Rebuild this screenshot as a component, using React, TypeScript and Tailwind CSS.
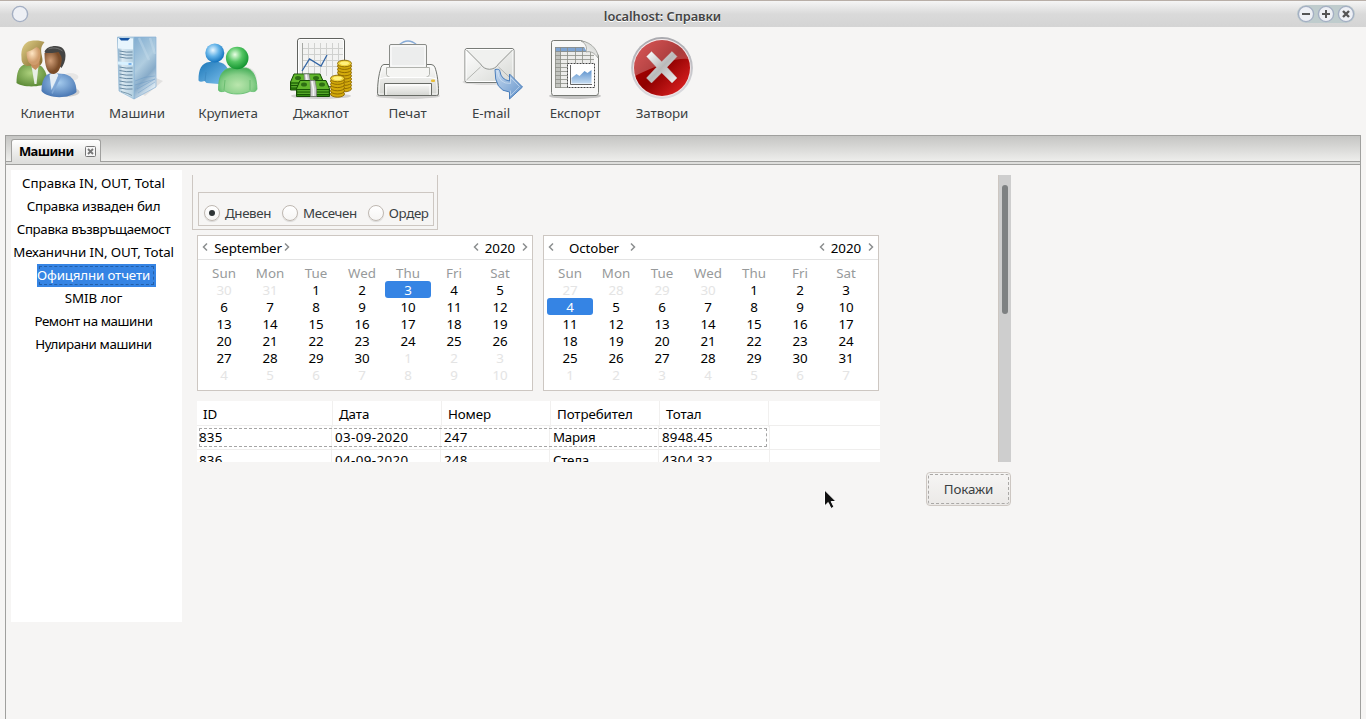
import type { ReactNode } from "react";

const FONT = "font-['Noto_Sans','Liberation_Sans',sans-serif]";

function ClientsIcon() {
  return (
    <svg viewBox="14.5 35 66 66" className="h-[66px] w-[66px]">
      <defs>
        <linearGradient id="hairA" x1="0" y1="0" x2="1" y2="1"><stop offset="0" stopColor="#e3d28a" /><stop offset="1" stopColor="#7c6226" /></linearGradient>
        <radialGradient id="faceA" cx=".4" cy=".35"><stop offset="0" stopColor="#ffe6c4" /><stop offset="1" stopColor="#cf9c6b" /></radialGradient>
        <radialGradient id="faceB" cx=".35" cy=".4"><stop offset="0" stopColor="#d2a079" /><stop offset="1" stopColor="#7b4d2a" /></radialGradient>
        <radialGradient id="bodyA" cx=".45" cy=".4" r=".6"><stop offset="0" stopColor="#acd07c" /><stop offset="1" stopColor="#5f8d39" /></radialGradient>
        <radialGradient id="bodyB" cx=".5" cy=".4" r=".6"><stop offset="0" stopColor="#a5cbee" /><stop offset="1" stopColor="#4a78b4" /></radialGradient>
      </defs>
      <ellipse cx="65" cy="92" rx="14" ry="5" fill="#000" opacity=".15" />
      <ellipse cx="70" cy="77" rx="8" ry="4" fill="#000" opacity=".06" />
      <path d="M16 83c0-10 2-17 9-19l14 1c5 3 8 9 8 18-5 4-25 5-31 0z" fill="url(#bodyA)" />
      <path d="M31 66l3 18h2l2-18-4-3z" fill="#e8eee6" />
      <path d="M21 58c-1-10 3-16 9-17 6-1 11 0 14 1-3 4-4 6-3 12 1 5 2 8-1 11l-14 1c-4-2-5-4-5-8z" fill="url(#hairA)" />
      <path d="M30 60l1 7 4 3 4-4v-6z" fill="#c58d5c" />
      <path d="M26 52c4-1 7-3 10-5 3 1 4 3 4 8 0 6-3 10-6 10-5 0-8-4-8-13z" fill="url(#faceA)" />
      <path d="M41 91c0-10 3-17 10-18l13 1c8 2 12 8 12 18-7 7-29 7-35-1z" fill="url(#bodyB)" />
      <path d="M49 75l2 15 7-15-4-4z" fill="#e4edf5" />
      <path d="M58 75l4-1-10 20-1-1z" fill="#7fa6d5" />
      <path d="M44 52c1-4 6-6 11-6 7 0 10 4 10 10 0 5-2 9-4 12L47 55z" fill="#444443" />
      <path d="M44 53c5 0 11 0 14-1 2 3 4 5 3 10-1 7-4 12-8 12-6 0-9-7-9-21z" fill="url(#faceB)" />
      <path d="M48 49c5-2 10-1 14 2" fill="none" stroke="#888" opacity=".7" />
    </svg>
  );
}

function ServerIcon() {
  return (
    <svg viewBox="104 35 66 66" className="h-[66px] w-[66px]">
      <defs>
        <linearGradient id="srvSide" x1="0" y1="0" x2=".4" y2="1"><stop offset="0" stopColor="#80acd0" /><stop offset=".5" stopColor="#b0cde0" /><stop offset=".75" stopColor="#87abc9" /><stop offset="1" stopColor="#dce9f2" /></linearGradient>
        <linearGradient id="srvFront" x1="0" y1="0" x2="1" y2="0"><stop offset="0" stopColor="#8db1cd" /><stop offset=".3" stopColor="#dbe9f1" /><stop offset="1" stopColor="#b1cee0" /></linearGradient>
      </defs>
      <path d="M145 96l18-15-7-3-14 16z" fill="#000" opacity=".08" />
      <path d="M134 37h22v50l-22 12z" fill="url(#srvSide)" stroke="#8ab2d6" strokeWidth=".7" />
      <path d="M117.500 37H134v62l-15-8z" fill="url(#srvFront)" stroke="#91b7d5" strokeWidth=".7" />
      <path d="M118 38l15 .5v11l-15-1z" fill="#e8f5fd" />
      <path d="M119 38h11l-2 2.500h-7z" fill="#1553a2" />
      {[51, 54, 57, 67, 70.5, 74, 77.500, 81, 84.500, 88].map((y) => (
        <path key={y} d={`M119.500 ${y}q7 1.700 13 1`} fill="none" stroke="#5c7f9a" strokeWidth=".9" />
      ))}
      <path d="M118 61.500l15 1v3l-15-1z" fill="#d8f1ff" />
      <path d="M128.500 64h3" stroke="#5a9be0" strokeWidth="1.500" />
      <path d="M139 38l10 22M150 38l5 16" stroke="#c8deed" strokeWidth="2.500" opacity=".4" />
      <path d="M135 81q10-5 20-5M135 85l20-6M137 89l18-10M138 93l17-11" fill="none" stroke="#6596c3" strokeWidth=".7" opacity=".6" />
      <path d="M121 91.500q8 2 11 4" stroke="#62859c" strokeWidth=".8" fill="none" />
    </svg>
  );
}

function PeopleIcon() {
  return (
    <svg viewBox="195 35 66 66" className="h-[66px] w-[66px]">
      <defs>
        <radialGradient id="ballBlue" cx=".4" cy=".35" r=".65"><stop offset="0" stopColor="#e9f7ff" /><stop offset=".5" stopColor="#63b3e8" /><stop offset="1" stopColor="#1474be" /></radialGradient>
        <radialGradient id="ballGreen" cx=".4" cy=".35" r=".65"><stop offset="0" stopColor="#eaffe5" /><stop offset=".5" stopColor="#54c563" /><stop offset="1" stopColor="#149631" /></radialGradient>
        <linearGradient id="torsoBlue" x1="0" y1="0" x2="1" y2="1"><stop offset="0" stopColor="#1c77b8" /><stop offset="1" stopColor="#83c4ef" /></linearGradient>
        <radialGradient id="torsoGreen" cx=".5" cy=".65" r=".65"><stop offset="0" stopColor="#bae6ad" /><stop offset=".6" stopColor="#8bd08b" /><stop offset="1" stopColor="#4bb15d" /></radialGradient>
      </defs>
      <ellipse cx="246" cy="80" rx="11" ry="13" fill="#000" opacity=".07" />
      <path d="M198.500 80c0-11 3-17 11-18h9c8 1 11 8 12 17-1 3-3 4-6 3l-6 2-12-1-2-2c-3 1-6 1-6-1z" fill="url(#torsoBlue)" />
      <path d="M206 72l-1 9" stroke="#3a86bd" fill="none" opacity=".7" />
      <circle cx="214.800" cy="53" r="9.500" fill="url(#ballBlue)" />
      <path d="M218.500 90c0-13 3-20 11-22h17c7 2 10 9 10.500 21-1 3-4 3-7 2-6 4-20 4-25 0-3 1-6 1-6.500-1z" fill="url(#torsoGreen)" stroke="#5cbb68" strokeWidth=".8" />
      <path d="M225 80l-1 10M250 80v10" stroke="#62b86a" strokeWidth=".8" fill="none" />
      <circle cx="237.200" cy="58" r="11.300" fill="url(#ballGreen)" />
    </svg>
  );
}

function Bills({ x, y }: { x: number; y: number }) {
  return (
    <g transform={`translate(${x} ${y})`}>
      <path d="M4 .5h26l3.500 8v8H.500v-8z" fill="#348b11" stroke="#174d05" />
      <path d="M1 9l3.500-8h25l3.500 8z" fill="#62b62c" />
      <path d="M1 9.500h32M1 12h32M1 14.500h32" stroke="#195605" />
      <path d="M1.500 10.800h31M1.500 13.300h31" stroke="#73c23f" strokeWidth=".7" />
      <ellipse cx="8" cy="4.500" rx="3" ry="2" fill="#2d6d13" />
      <ellipse cx="26" cy="4.500" rx="3" ry="2" fill="#2d6d13" />
      <path d="M14 .5h5l1.500 8v8h-6v-8z" fill="#cacaca" stroke="#777" strokeWidth=".7" />
      <path d="M16 1l1.500 8v7" stroke="#f6f6f6" strokeWidth="1.500" fill="none" />
    </g>
  );
}

function Coins({ x, y, n }: { x: number; y: number; n: number }) {
  return (
    <g transform={`translate(${x} ${y})`}>
      {Array.from({ length: n }, (_, i) => n - i).map((k) => (
        <ellipse key={k} cx="7" cy={3 + k * 3.2} rx="7" ry="3.200" fill="#d2a90b" stroke="#8a6500" strokeWidth=".9" />
      ))}
      <ellipse cx="7" cy="3.500" rx="7" ry="3.300" fill="#efd33c" stroke="#8a6500" strokeWidth=".9" />
      <ellipse cx="7" cy="3.300" rx="4.500" ry="1.800" fill="#fff07c" />
    </g>
  );
}

function JackpotIcon() {
  return (
    <svg viewBox="288 35 66 66" className="h-[66px] w-[66px]">
      <ellipse cx="321" cy="96" rx="30" ry="3" fill="#000" opacity=".15" />
      <rect x="297.500" y="38.500" width="47" height="48" rx="2.500" fill="#f3f3f2" stroke="#60625e" />
      <rect x="298.500" y="39.500" width="45" height="46" rx="2" fill="none" stroke="#fff" />
      <path d="M308.500 43v33M314.500 43v33M320.500 43v33M326.500 43v33M332.500 43v33M338.500 43v33M302 48.500h41M302 54.500h41M302 60.500h41M302 66.500h41" stroke="#d0d1cf" />
      <path d="M302.500 43v34" stroke="#a6a8a4" />
      <path d="M302 71l7.500-12 11.500 7 6-11" fill="none" stroke="#3465a4" strokeWidth="1.300" />
      <Coins x={337.5} y={60} n={8} />
      <Bills x={290} y={73.500} />
      <Bills x={296} y={80} />
      <Coins x={330.5} y={75} n={5} />
    </svg>
  );
}

function PrinterIcon() {
  return (
    <svg viewBox="375 35 66 66" className="h-[66px] w-[66px]">
      <defs>
        <linearGradient id="prBody" x1="0" y1="0" x2="0" y2="1"><stop offset="0" stopColor="#fbfbfa" /><stop offset="1" stopColor="#d4d5d1" /></linearGradient>
      </defs>
      <ellipse cx="408" cy="96" rx="32" ry="3" fill="#000" opacity=".15" />
      <path d="M399 45q9-8 18 0" fill="none" stroke="#86aad6" strokeWidth="1.500" />
      <path d="M384 64.500h47q3 0 4 3c2 6 3 12 3.500 21v5.500q0 1.500-2 1.500h-57q-2 0-2-2c0-10 1-18 3.500-26q1-3 3-3z" fill="url(#prBody)" stroke="#70736e" />
      <path d="M384 66h47q2 0 3 3c2 5 2 10 3 19v6h-58v-3c0-9 1-16 3-22q0-3 2-3z" fill="none" stroke="#fff" opacity=".7" />
      <rect x="389.500" y="44.500" width="37" height="27" rx="1.500" fill="#eceded" stroke="#8a8c88" />
      <rect x="391" y="46" width="34" height="20" fill="none" stroke="#fff" />
      <path d="M386.500 67.500h43v7q-1 3-4 3h-35q-3 0-4-3z" fill="#f5f5f3" stroke="#b0b2ad" />
      <path d="M379 79l6-1.500h45l7 1.500" fill="none" stroke="#fff" />
      <path d="M384.500 95.500v-12h47v12z" fill="url(#prBody)" stroke="#676a65" />
      <path d="M386 95V85h44v10" fill="none" stroke="#fff" />
      <rect x="431" y="79.500" width="4" height="2.500" rx="1" fill="#e8bd36" />
    </svg>
  );
}

function MailIcon() {
  return (
    <svg viewBox="457.500 35 66 66" className="h-[66px] w-[66px]">
      <defs>
        <linearGradient id="mlBody" x1="0" y1="0" x2="1" y2="1"><stop offset="0" stopColor="#fff" /><stop offset="1" stopColor="#d6d8d4" /></linearGradient>
        <linearGradient id="mlArrow" x1="0" y1="0" x2="1" y2="1"><stop offset="0" stopColor="#c8dbf0" /><stop offset="1" stopColor="#6191c9" /></linearGradient>
      </defs>
      <ellipse cx="486" cy="82" rx="24" ry="3" fill="#000" opacity=".1" />
      <rect x="464.500" y="48.500" width="49" height="34" rx="2" fill="url(#mlBody)" stroke="#787b77" />
      <rect x="465.500" y="49.500" width="47" height="32" rx="1" fill="none" stroke="#fff" />
      <path d="M466 80l14-13M512 80l-14-13" stroke="#b4b6b2" />
      <path d="M466 50l14 14c4 7 14 7 18 0l14-14" fill="#f0f1ef" stroke="#868984" strokeWidth=".9" />
      <path d="M494.500 69.500q5-1 5 2 1 8 9.500 9.500v-7l13 13-13 12v-7q-15-1-14.500-22.500z" fill="url(#mlArrow)" stroke="#4a7ebb" />
      <path d="M497 71q1 13 13 12.500v-6l9 9-9 9v-5" fill="none" stroke="#e1edf8" opacity=".5" />
    </svg>
  );
}

function ExportIcon() {
  return (
    <svg viewBox="542 35 66 66" className="h-[66px] w-[66px]">
      <defs>
        <linearGradient id="exFold" x1="0" y1="1" x2="1" y2="0"><stop offset="0" stopColor="#fff" /><stop offset="1" stopColor="#c9cbc7" /></linearGradient>
        <linearGradient id="exArea" x1="0" y1="0" x2="0" y2="1"><stop offset="0" stopColor="#5c92cd" /><stop offset="1" stopColor="#c6dcf1" /></linearGradient>
      </defs>
      <ellipse cx="575" cy="96" rx="26" ry="3" fill="#000" opacity=".2" />
      <path d="M553.500 40.500h27q8 1 18 15v37q0 3-2.500 3h-42.500q-2 0-2-3v-50q0-2 2-2z" fill="#f8f8f7" stroke="#777a75" />
      <path d="M555 47h30v5h9v36h-39z" fill="#ececea" />
      <path d="M555 52h6v36h-6z" fill="#c2c4bf" />
      <path d="M555 47h29l3 5h-32z" fill="#7fa4d1" />
      <path d="M555.500 47v41M560.500 47v41M567.500 47v41M575.500 47v16M582.500 47v16M590.500 52v11M555 47.500h29M555 51.500h39M555 55.500h39M555 59.500h39M555 63.500h13M555 67.500h13M555 71.500h13M555 75.500h13M555 79.500h13M555 83.500h13M555 87.500h13" stroke="#8b8e87" strokeWidth=".8" />
      <path d="M581 41c6 3 6 8 5 11 4-1 8 0 12 6 1-5-5-16-17-17z" fill="url(#exFold)" stroke="#9a9d98" strokeWidth=".8" />
      <rect x="567.500" y="63.500" width="27" height="24" fill="#fff" stroke="#444" strokeDasharray="2 1" />
      <path d="M570.500 65v19.500H592" fill="none" stroke="#666" />
      <path d="M571.500 78l5-4 3 2 5-5 3 2 4-3v13.500h-20z" fill="url(#exArea)" />
    </svg>
  );
}

function CloseIcon() {
  return (
    <svg viewBox="629 35 66 66" className="h-[66px] w-[66px]">
      <defs>
        <linearGradient id="clRed" x1="0" y1="0" x2="1" y2="1"><stop offset="0" stopColor="#c80000" /><stop offset=".5" stopColor="#8f0000" /><stop offset="1" stopColor="#ec2929" /></linearGradient>
        <linearGradient id="clRing" x1="0" y1="0" x2="0" y2="1"><stop offset="0" stopColor="#a9a9ae" /><stop offset="1" stopColor="#dedee2" /></linearGradient>
        <linearGradient id="clX" x1="0" y1="0" x2="1" y2="1"><stop offset="0" stopColor="#fff" /><stop offset=".5" stopColor="#b9b9b9" /><stop offset="1" stopColor="#f2f2f2" /></linearGradient>
        <linearGradient id="clGloss" x1="0" y1="0" x2="1" y2=".5"><stop offset="0" stopColor="#fff" stopOpacity=".35" /><stop offset="1" stopColor="#fff" stopOpacity=".2" /></linearGradient>
      </defs>
      <circle cx="662" cy="68" r="30.900" fill="url(#clRing)" />
      <circle cx="662" cy="68" r="28.900" fill="#f3e4e6" />
      <circle cx="662" cy="68" r="28" fill="url(#clRed)" />
      <path d="M635 76a28 28 0 1 1 54.500-17q-12-1-24 4-17 6-30.500 13z" fill="url(#clGloss)" />
      <path d="M651.500 51.500l10.200 10.300L672 51.500l5 5L667 67.200 677 78l-5 5-10.300-10.200L651.500 83l-5-5 10-10.800-10-10.700z" fill="url(#clX)" stroke="#c8c0c0" strokeWidth=".4" strokeLinejoin="round" />
    </svg>
  );
}

function ToolButton({ className, label, children }: { className: string; label: string; children: ReactNode }) {
  return (
    <div className={`flex shrink-0 flex-col items-center pt-2 ${className}`}>
      {children}
      <span className="mt-[2px] whitespace-nowrap text-[13.33px] leading-5 tracking-[-0.05px] text-[#3a4042]">{label}</span>
    </div>
  );
}

function WindowButton({ children }: { children?: ReactNode }) {
  return (
    <svg viewBox="0 0 18 18" className="h-[18px] w-[18px]">
      <circle cx="9" cy="9" r="7.600" fill="#eef0f5" stroke="#a4afc3" strokeWidth="1.400" />
      <g stroke="#555" strokeWidth="2" fill="none">{children}</g>
    </svg>
  );
}

const reports = [
  { label: "Справка IN, OUT, Total", tracking: "tracking-normal" },
  { label: "Справка изваден бил", tracking: "tracking-[-0.25px]" },
  { label: "Справка възвръщаемост", tracking: "tracking-[-0.35px]" },
  { label: "Механични IN, OUT, Total", tracking: "tracking-[-0.1px]" },
  { label: "Офицялни отчети", tracking: "tracking-[-0.15px]" },
  { label: "SMIB лог", tracking: "tracking-normal" },
  { label: "Ремонт на машини", tracking: "tracking-[-0.4px]" },
  { label: "Нулирани машини", tracking: "tracking-[-0.35px]" },
];

function Radio({ label, checked }: { label: string; checked?: boolean }) {
  return (
    <label className="flex items-center gap-[5px]">
      <span className="flex h-4 w-4 items-center justify-center rounded-full border border-[#bfb8b1] bg-gradient-to-b from-white to-[#f6f5f4] shadow-[0_1px_1px_rgba(0,0,0,0.12)]">
        {checked && <span className="h-[6px] w-[6px] rounded-full bg-[#2e3436]" />}
      </span>
      <span className="text-[13.33px] leading-5 tracking-[-0.38px] text-[#3a4042]">{label}</span>
    </label>
  );
}

function Chevron({ right }: { right?: boolean }) {
  return (
    <svg viewBox="0 0 6 10" className="mb-px h-[10px] w-[6px] shrink-0">
      <path d={right ? "M1 1.500L4.500 5 1 8.500" : "M5 1.500L1.500 5 5 8.500"} fill="none" stroke="#8b8e8f" strokeWidth="1.500" />
    </svg>
  );
}

const weekDays = ["Sun", "Mon", "Tue", "Wed", "Thu", "Fri", "Sat"];

function Calendar({ month, before, length, selected }: { month: string; before: number[]; length: number; selected: number }) {
  const cells = Array.from({ length: 42 }, (_, i) => {
    if (i < before.length) return { n: before[i], out: true };
    const n = i - before.length + 1;
    return n <= length ? { n, out: false } : { n: n - length, out: true };
  });
  return (
    <div className="h-[156px] w-[336px] shrink-0 border border-[#cdc7c2] bg-white text-[13.33px] text-black">
      <div className="flex h-6 items-center justify-between border-b border-[#e3e3e3] px-1">
        <div className="flex items-center">
          <Chevron />
          <span className="-mr-[3px] w-[79px] pl-px text-center leading-5 tracking-[-0.15px]">{month}</span>
          <Chevron right />
        </div>
        <div className="flex items-center">
          <Chevron />
          <span className="w-[43px] pr-px text-center leading-5">2020</span>
          <Chevron right />
        </div>
      </div>
      <div className="ml-[3px] grid w-[322px] grid-cols-7 pt-1 text-center">
        {weekDays.map((d) => (
          <span key={d} className="h-[17px] leading-[18px] text-[#979a9b]">{d}</span>
        ))}
        {cells.map((c, i) => (
          <span
            key={i}
            className={`h-[17px] leading-[18px] ${c.out ? "text-[#e4e4e4]" : c.n === selected ? "rounded-[3px] bg-[#3584e4] text-white" : ""}`}
          >
            {c.n}
          </span>
        ))}
      </div>
    </div>
  );
}

const columns = ["ID", "Дата", "Номер", "Потребител", "Тотал"];
const rows = [
  ["835", "03-09-2020", "247", "Мария", "8948.45"],
  ["836", "04-09-2020", "248", "Стела", "4304.32"],
];

function OrdersTable() {
  return (
    <div className="mt-[10px] w-[683px] bg-white text-[13.33px] text-black">
      <div className="grid h-[25px] grid-cols-[136px_109px_109px_109px_109px_111px] border-b border-[#efeeed]">
        {columns.map((c) => (
          <span key={c} className="border-r border-[#f1f0ef] pl-[6px] leading-[26px] tracking-[-0.1px]">{c}</span>
        ))}
      </div>
      {rows.map((r, i) => (
        <div key={r[0]} className="relative grid h-6 grid-cols-[135px_109px_109px_109px_111px_110px] border-b border-[#efeeed]">
          {r.map((v, col) => (
            <span
              key={v}
              className={`border-r border-[#f1f0ef] ${col === 0 ? "pl-[2px]" : "pl-[3px]"} ${i === 0 ? "leading-[23px]" : "leading-[21px]"} ${col === 1 ? "tracking-[0.4px]" : col === 3 ? "tracking-[-0.25px]" : "tracking-[0.2px]"}`}
            >
              {v}
            </span>
          ))}
          {i === 0 && <div className="absolute left-[2px] top-[2px] h-[19px] w-[568px] rounded-[1px] border border-dashed border-[#a5a5a5]" />}
        </div>
      ))}
    </div>
  );
}

export default function App() {
  return (
    <div className={`relative flex h-[719px] w-[1366px] flex-col overflow-hidden bg-[#f6f5f4] ${FONT}`}>
      <header className="flex h-[27px] shrink-0 items-center border-t border-[#b8aea7] bg-gradient-to-b from-[#f5f5f5] via-[#dadada] to-[#d4d4d4] pl-[11px] pr-[11px]">
        <div className="flex w-[58px]"><WindowButton /></div>
        <div className="flex-1 pr-[41px] pt-1 text-center text-[12.800px] font-semibold leading-5 tracking-[-0.07px] text-[#444] [text-shadow:0_1px_0_#fff]">localhost: Справки</div>
        <div className="flex w-[58px] gap-[2px] rounded-full bg-[#bfcccd]">
          <WindowButton><path d="M5 9h8" /></WindowButton>
          <WindowButton><path d="M5 9h8M9 5v8" /></WindowButton>
          <WindowButton><path d="M6 6l6 6M12 6l-6 6" strokeWidth="2.400" /></WindowButton>
        </div>
      </header>

      <nav className="flex h-[108px] shrink-0">
        <ToolButton className="w-[95px]" label="Клиенти"><ClientsIcon /></ToolButton>
        <ToolButton className="w-[84px]" label="Машини"><ServerIcon /></ToolButton>
        <ToolButton className="w-[98px]" label="Крупиета"><PeopleIcon /></ToolButton>
        <ToolButton className="w-[88px]" label="Джакпот"><JackpotIcon /></ToolButton>
        <ToolButton className="w-[85px]" label="Печат"><PrinterIcon /></ToolButton>
        <ToolButton className="w-[82px]" label="E-mail"><MailIcon /></ToolButton>
        <ToolButton className="w-[86px]" label="Експорт"><ExportIcon /></ToolButton>
        <ToolButton className="w-[88px]" label="Затвори"><CloseIcon /></ToolButton>
      </nav>

      <section className="ml-[5px] flex w-[1356px] flex-1 flex-col border-x border-t border-[#a0a09e]">
        <div className="flex h-[26px] shrink-0 items-end border-b border-[#a0a09e] bg-gradient-to-b from-[#c5c5c3] to-[#eeeeec] pl-[5px]">
          <div className="-mb-px flex h-[23px] w-[90px] items-center justify-between rounded-t-[3px] border border-b-0 border-[#a0a09e] bg-gradient-to-b from-white to-[#dededc] pl-[7px] pr-1">
            <span className="text-[13px] font-bold leading-5 tracking-[-0.65px] text-black">Машини</span>
            <svg viewBox="0 0 11 11" className="h-[11px] w-[11px]">
              <rect x=".5" y=".5" width="10" height="10" rx="1" fill="#f6f6f6" stroke="#777" />
              <path d="M3 3l5 5M8 3L3 8" stroke="#777" strokeWidth="1.800" />
            </svg>
          </div>
        </div>
        <div className="h-[3px] shrink-0 border-b border-[#a0a09e] bg-[#dededc]" />

        <div className="flex flex-1 items-start">
          <aside className="ml-[5px] mt-[5px] flex h-[452px] w-[171px] flex-col items-center bg-white pt-[2px]">
            {reports.map((r, i) =>
              i === 4 ? (
                <div key={r.label} className={`relative h-[23px] w-[119px] whitespace-nowrap bg-[#3584e4] text-[13.33px] leading-[23px] text-white ${r.tracking}`}>
                  <div className="absolute inset-[2px] rounded-[1px] border border-dashed border-[#235fa8]" />
                  <span className="relative">{r.label}</span>
                </div>
              ) : (
                <div key={r.label} className={`mr-[6px] h-[23px] whitespace-nowrap text-[13.33px] leading-[23px] text-black ${r.tracking}`}>{r.label}</div>
              ),
            )}
          </aside>

          <div className="ml-[10px] mt-[10px] flex w-[819px] flex-col">
            <div className="flex h-[287px] justify-between overflow-hidden">
              <div>
                <div className="h-[55px] w-[246px] border border-t-0 border-[#cdc7c2] px-[5px] pt-[17px]">
                  <div className="flex h-[34px] w-[236px] items-center gap-[11px] border border-[#cdc7c2] pl-[5px] pt-[8px]">
                    <Radio label="Дневен" checked />
                    <Radio label="Месечен" />
                    <Radio label="Ордер" />
                  </div>
                </div>
                <div className="pl-[5px]">
                  <div className="mt-[5px] flex gap-[10px]">
                    <Calendar month="September" before={[30, 31]} length={30} selected={3} />
                    <Calendar month="October" before={[27, 28, 29, 30]} length={31} selected={4} />
                  </div>
                  <OrdersTable />
                </div>
              </div>
              <div className="h-full w-[13px] border-l border-[#cdc7c2] bg-[#cecece] pl-[3px] pt-[10px]">
                <div className="h-[129px] w-[6px] rounded-full bg-[#7e8182]" />
              </div>
            </div>
            <button className="mt-[10px] flex h-[34px] w-[85px] self-end rounded-[4px] border border-[#cdc7c2] bg-gradient-to-b from-[#f6f5f4] to-[#ebe9e7] p-px text-[13.33px] text-[#3a4042]">
              <span className="flex h-full w-full items-center justify-center rounded-[2px] border border-dashed border-[#aaa8a6] pt-[2px] tracking-[-0.1px]">Покажи</span>
            </button>
          </div>
        </div>
      </section>

      <svg viewBox="0 0 14 21" className="absolute left-[823px] top-[489px] h-[21px] w-[14px]">
        <path d="M1.500 1v16l3.700-3.500L8 19.500l3-1.500-2.800-5.500H13z" fill="#111" stroke="#fff" />
      </svg>
    </div>
  );
}
